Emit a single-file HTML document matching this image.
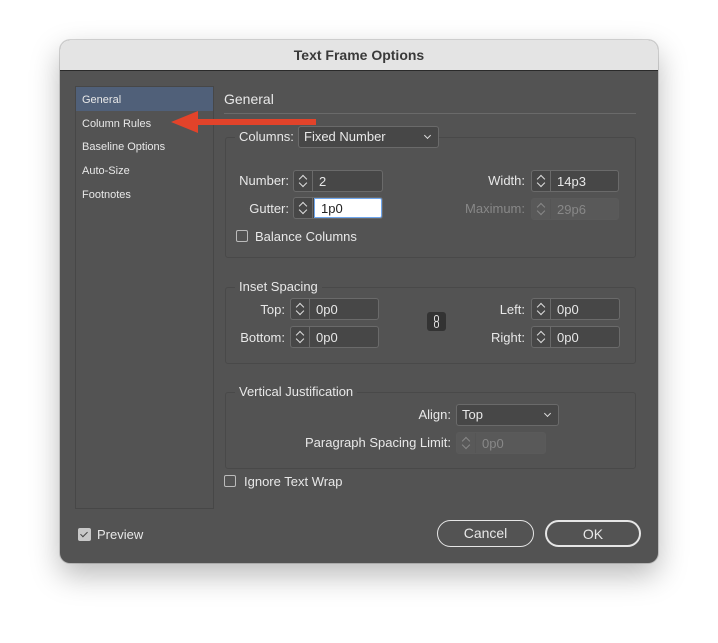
<!DOCTYPE html>
<html><head><style>
*{margin:0;padding:0;box-sizing:border-box}
body{width:718px;height:643px;background:#fff;position:relative;overflow:hidden;font-family:"Liberation Sans",sans-serif;color:#e8e8e8}
.dlg{position:absolute;left:60px;top:40px;width:598px;height:523px;background:#535353;border-radius:10px;overflow:hidden;box-shadow:0 12px 30px rgba(0,0,0,.28),0 0 0 1px rgba(0,0,0,.15)}
.tb{position:absolute;left:0;top:0;width:100%;height:31px;background:#e4e4e4;border-bottom:1px solid #2a2a2a;text-align:center;font-weight:bold;font-size:14px;color:#3a3a3a;line-height:31px}
.a{position:absolute}
.t{position:absolute;font-size:13px;white-space:nowrap;line-height:16px}
.s{font-size:11px}
.side{position:absolute;left:75px;top:86px;width:139px;height:423px;border:1px solid #474747}
.box{position:absolute;border:1px solid #494949;border-radius:3px}
.leg{position:absolute;background:#535353;padding:0 4px;font-size:13px;line-height:16px}
.fld{position:absolute;height:22px;border:1px solid #6a6a6a;border-radius:3px;background:#474747}
.fld .sp{position:absolute;left:0;top:0;width:19px;height:100%;border-right:1px solid #6a6a6a}
.fld .sp:before,.fld .sp:after{content:"";position:absolute;left:6px;width:5px;height:5px;border-left:1px solid #ddd;border-top:1px solid #ddd}
.fld .sp:before{top:5px;transform:rotate(45deg)}
.fld .sp:after{top:9px;transform:rotate(-135deg)}
.fld .v{position:absolute;left:25px;top:3px;font-size:13px}
.dis{border-color:#5a5a5a;background:#595959}
.dis .sp{border-color:#555}
.dis .sp:before,.dis .sp:after{border-color:#888}
.dis .v{color:#888}
.r{text-align:right}
.cb{position:absolute;width:12px;height:12px;border:1px solid #bbb;border-radius:2px}
.btn{position:absolute;height:27px;border:1.5px solid #e6e6e6;border-radius:14px;text-align:center;line-height:24px;font-size:14px}
.dd{position:absolute;height:22px;border:1px solid #6a6a6a;border-radius:3px;background:#474747;font-size:13px;line-height:20px;padding-left:5px}
.dd:after{content:"";position:absolute;right:8px;top:6px;width:4px;height:4px;border-right:1px solid #ddd;border-bottom:1px solid #ddd;transform:rotate(45deg)}
</style></head><body>
<div class="dlg"><div class="tb">Text Frame Options</div></div>

<div class="side"></div>
<div class="a" style="left:76px;top:87px;width:137px;height:24px;background:#506079"></div>
<div class="t s" style="left:82px;top:92px">General</div>
<div class="t s" style="left:82px;top:116px">Column Rules</div>
<div class="t s" style="left:82px;top:139px">Baseline Options</div>
<div class="t s" style="left:82px;top:163px">Auto-Size</div>
<div class="t s" style="left:82px;top:187px">Footnotes</div>

<div class="t" style="left:224px;top:91px;font-size:14px">General</div>
<div class="a" style="left:224px;top:113px;width:412px;height:1px;background:#6a6a6a"></div>

<!-- Columns -->
<div class="box" style="left:225px;top:137px;width:411px;height:121px"></div>
<div class="leg" style="left:235px;top:129px">Columns:</div>
<div class="dd" style="left:298px;top:126px;width:141px">Fixed Number</div>
<div class="t r" style="left:200px;top:173px;width:89px">Number:</div>
<div class="fld" style="left:293px;top:170px;width:90px"><div class="sp"></div><span class="v">2</span></div>
<div class="t r" style="left:200px;top:201px;width:89px">Gutter:</div>
<div class="fld" style="left:293px;top:197px;width:90px"><div class="sp"></div><div class="a" style="left:20px;top:0;right:0;bottom:0;background:#fff;border:1px solid #6ea6ee;border-radius:0 2px 2px 0"></div><span class="v" style="color:#222;left:27px">1p0</span></div>
<div class="cb" style="left:236px;top:230px"></div>
<div class="t" style="left:255px;top:229px">Balance Columns</div>
<div class="t r" style="left:420px;top:173px;width:105px">Width:</div>
<div class="fld" style="left:531px;top:170px;width:88px"><div class="sp"></div><span class="v">14p3</span></div>
<div class="t r" style="left:420px;top:201px;width:105px;color:#888">Maximum:</div>
<div class="fld dis" style="left:531px;top:198px;width:88px"><div class="sp"></div><span class="v">29p6</span></div>

<!-- Inset -->
<div class="box" style="left:225px;top:287px;width:411px;height:77px"></div>
<div class="leg" style="left:235px;top:279px">Inset Spacing</div>
<div class="t r" style="left:200px;top:302px;width:85px">Top:</div>
<div class="fld" style="left:290px;top:298px;width:89px"><div class="sp"></div><span class="v">0p0</span></div>
<div class="t r" style="left:200px;top:330px;width:85px">Bottom:</div>
<div class="fld" style="left:290px;top:326px;width:89px"><div class="sp"></div><span class="v">0p0</span></div>
<div class="a" style="left:427px;top:312px;width:19px;height:19px;background:#333;border-radius:3px"></div>
<div class="a" style="left:434px;top:315px;width:5px;height:7px;border:1px solid #ddd;border-radius:3px"></div>
<div class="a" style="left:434px;top:321px;width:5px;height:7px;border:1px solid #ddd;border-radius:3px"></div>
<div class="t r" style="left:420px;top:302px;width:105px">Left:</div>
<div class="fld" style="left:531px;top:298px;width:89px"><div class="sp"></div><span class="v">0p0</span></div>
<div class="t r" style="left:420px;top:330px;width:105px">Right:</div>
<div class="fld" style="left:531px;top:326px;width:89px"><div class="sp"></div><span class="v">0p0</span></div>

<!-- VJ -->
<div class="box" style="left:225px;top:392px;width:411px;height:77px"></div>
<div class="leg" style="left:235px;top:384px">Vertical Justification</div>
<div class="t r" style="left:300px;top:407px;width:151px">Align:</div>
<div class="dd" style="left:456px;top:404px;width:103px">Top</div>
<div class="t r" style="left:260px;top:435px;width:191px">Paragraph Spacing Limit:</div>
<div class="fld dis" style="left:456px;top:432px;width:90px"><div class="sp"></div><span class="v">0p0</span></div>

<div class="cb" style="left:224px;top:475px"></div>
<div class="t" style="left:244px;top:474px">Ignore Text Wrap</div>

<div class="a" style="left:78px;top:528px;width:13px;height:13px;background:#c8c8c8;border-radius:2px"></div>
<div class="a" style="left:82px;top:530px;width:4px;height:7px;border-right:1.5px solid #444;border-bottom:1.5px solid #444;transform:rotate(45deg)"></div>
<div class="t" style="left:97px;top:527px">Preview</div>

<div class="btn" style="left:437px;top:520px;width:97px">Cancel</div>
<div class="btn" style="left:545px;top:520px;width:96px;border-width:2px">OK</div>

<!-- arrow -->
<div class="a" style="left:194px;top:119px;width:122px;height:6px;background:#e2432a"></div>
<svg class="a" style="left:170px;top:110px" width="30" height="25"><polygon points="1,12 28,1 28,23" fill="#e2432a"/></svg>
</body></html>
